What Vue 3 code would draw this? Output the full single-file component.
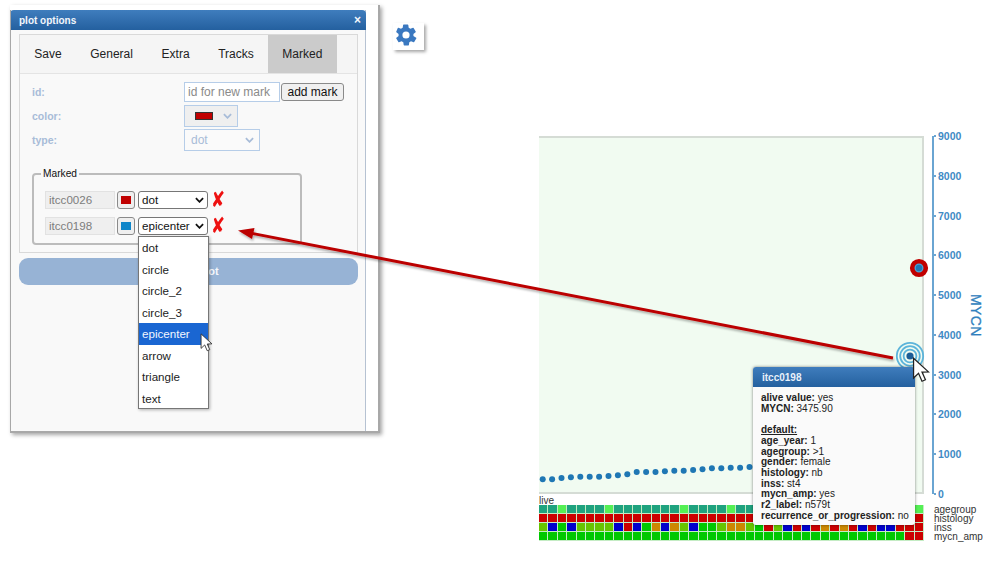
<script setup>
const tabs = ['Save', 'General', 'Extra', 'Tracks', 'Marked']
const options = ['dot', 'circle', 'circle_2', 'circle_3', 'epicenter', 'arrow', 'triangle', 'text']
const ticks = [9000, 8000, 7000, 6000, 5000, 4000, 3000, 2000, 1000, 0]

const dotYs = [479.3, 479.3, 478, 477.3, 476.7, 476.7, 476.7, 476, 475.3, 474.3, 472, 472, 472, 471.3, 470.7, 470.7, 470, 469.3, 468.3, 468.3, 467.7, 467.7, 467, 467, 466.5]
const dots = dotYs.map((y, i) => ({ x: 3.7 + i * 9.4, y: y - 136 }))

const row3 = 'LBGBLLLLBRBGOBOLBGGLO'.split('').concat('OLGRLBRBRORORBRBBRRR'.split(''))
const rows = [
  Array.from({ length: 41 }, (_, i) => ([2, 7, 15, 20, 40].includes(i) ? 'P' : 'T')),
  Array.from({ length: 41 }, () => 'R'),
  row3,
  Array.from({ length: 41 }, (_, i) => (i >= 39 ? 'R' : 'G'))
]
const palette = { T: '#1fa37f', P: '#55f055', R: '#cc0000', L: '#66c400', B: '#0000cc', G: '#00c800', O: '#cc8800' }
const cells = rows.flatMap((r) => r.map((c) => palette[c]))
const rowLabels = ['agegroup', 'histology', 'inss', 'mycn_amp']

const tipTop = [
  ['alive value:', 'yes'],
  ['MYCN:', '3475.90']
]
const tipBottom = [
  ['age_year:', '1'],
  ['agegroup:', '>1'],
  ['gender:', 'female'],
  ['histology:', 'nb'],
  ['inss:', 'st4'],
  ['mycn_amp:', 'yes'],
  ['r2_label:', 'n579t'],
  ['recurrence_or_progression:', 'no']
]
const cursor = 'M1 1 L1 17 L5 13.2 L7.8 19.6 L10.6 18.4 L7.8 12.2 L13 12 Z'
</script>

<template>
  <div class="page">
    <section class="window">
      <div class="dialog">
        <header class="title">
          <span>plot options</span>
          <span class="close">×</span>
        </header>
        <div class="dialog-body">
          <div class="tabbox">
            <nav class="tabs">
              <span v-for="t in tabs" :key="t" class="tab" :class="{ active: t === 'Marked' }">{{ t }}</span>
            </nav>
            <div class="form">
              <div class="form-row r-id">
                <label>id:</label>
                <span class="input-new">id for new mark</span>
                <span class="btn-add">add mark</span>
              </div>
              <div class="form-row r-color">
                <label>color:</label>
                <span class="pick">
                  <i class="pick-swatch"></i>
                  <svg class="chev" viewBox="0 0 10 6"><path d="M1 1l4 4 4-4" /></svg>
                </span>
              </div>
              <div class="form-row r-type">
                <label>type:</label>
                <span class="pick pick-type">
                  dot
                  <svg class="chev" viewBox="0 0 10 6"><path d="M1 1l4 4 4-4" /></svg>
                </span>
              </div>
              <div class="fieldset">
                <span class="legend">Marked</span>
                <div class="mark-row">
                  <span class="mark-id">itcc0026</span>
                  <span class="mark-color"><i class="red"></i></span>
                  <span class="mark-select">dot<svg viewBox="0 0 10 6"><path d="M1 1l4 4 4-4" /></svg></span>
                  <span class="del">✘</span>
                </div>
                <div class="mark-row">
                  <span class="mark-id">itcc0198</span>
                  <span class="mark-color"><i class="blue"></i></span>
                  <span class="mark-select">epicenter<svg viewBox="0 0 10 6"><path d="M1 1l4 4 4-4" /></svg></span>
                  <span class="del">✘</span>
                </div>
              </div>
            </div>
          </div>
          <div class="plot-btn">Update plot</div>
        </div>
      </div>
      <ul class="dropdown">
        <li v-for="o in options" :key="o" :class="{ hl: o === 'epicenter' }">{{ o }}</li>
      </ul>
      <svg class="cursor-small" viewBox="0 0 14 21"><path :d="cursor" /></svg>
    </section>

    <div class="gear-box">
      <svg viewBox="0 0 24 24" class="gear">
        <path d="M19.4 13a7.6 7.6 0 0 0 0-2l2.2-1.7a.5.5 0 0 0 .1-.7l-2.1-3.6a.5.5 0 0 0-.6-.2l-2.6 1a7.6 7.6 0 0 0-1.7-1l-.4-2.8a.5.5 0 0 0-.5-.4h-4.2a.5.5 0 0 0-.5.4l-.4 2.8a7.6 7.6 0 0 0-1.7 1l-2.6-1a.5.5 0 0 0-.6.2L2.3 8.6a.5.5 0 0 0 .1.7L4.6 11a7.6 7.6 0 0 0 0 2l-2.2 1.7a.5.5 0 0 0-.1.7l2.1 3.6c.1.2.4.3.6.2l2.6-1a7.6 7.6 0 0 0 1.7 1l.4 2.8c0 .2.3.4.5.4h4.2c.2 0 .5-.2.5-.4l.4-2.8a7.6 7.6 0 0 0 1.7-1l2.6 1c.2.1.5 0 .6-.2l2.1-3.6a.5.5 0 0 0-.1-.7zM12 15.6a3.6 3.6 0 1 1 0-7.2 3.6 3.6 0 0 1 0 7.2z" />
      </svg>
    </div>

    <section class="chart">
      <div class="chart-top">
        <div class="plot">
          <svg class="dots" width="385" height="358">
            <circle v-for="(d, i) in dots" :key="i" :cx="d.x" :cy="d.y" r="3" fill="#1f77b4" />
          </svg>
        </div>
        <div class="axis">
          <div v-for="t in ticks" :key="t" class="tick"><i></i>{{ t }}</div>
        </div>
        <div class="axis-title">MYCN</div>
      </div>
      <div class="live">live</div>
      <div class="heat-wrap">
        <div class="heat">
          <i v-for="(c, i) in cells" :key="i" :style="{ background: c }"></i>
        </div>
        <div class="heat-labels">
          <span v-for="l in rowLabels" :key="l">{{ l }}</span>
        </div>
      </div>
    </section>

    <svg class="overlay" width="1005" height="569">
      <defs>
        <filter id="sh" x="-5%" y="-20%" width="110%" height="140%">
          <feDropShadow dx="1" dy="2" stdDeviation="1.2" flood-color="#000" flood-opacity=".3" />
        </filter>
      </defs>
      <g filter="url(#sh)">
        <line x1="252" y1="233.4" x2="893" y2="358" stroke="#bb0000" stroke-width="3" />
        <path d="M238 230.5 L254.5 228 L252 239 Z" fill="#bb0000" />
      </g>
      <circle cx="919" cy="268" r="6.8" fill="#4aa3d6" stroke="#c00000" stroke-width="4.6" />
      <circle cx="919" cy="268" r="3.2" fill="#1f77b4" />
      <g fill="none" stroke="#5cb4da" stroke-width="1.8">
        <circle cx="910" cy="356" r="13.2" />
        <circle cx="910" cy="356" r="9.8" />
        <circle cx="910" cy="356" r="6.4" />
      </g>
      <circle cx="910" cy="356" r="3.6" fill="#1c5d96" />
    </svg>

    <aside class="tooltip">
      <header>itcc0198</header>
      <div class="tip-body">
        <div v-for="r in tipTop" :key="r[0]"><b>{{ r[0] }}</b> {{ r[1] }}</div>
        <div class="gap"><b><u>default:</u></b></div>
        <div v-for="r in tipBottom" :key="r[0]"><b>{{ r[0] }}</b> {{ r[1] }}</div>
      </div>
    </aside>

    <svg class="cursor-big" viewBox="0 0 14 21"><path :d="cursor" /></svg>
  </div>
</template>

<style scoped>
.page {
  position: relative;
  width: 1005px;
  height: 569px;
  overflow: hidden;
  background: #fff;
  font-family: "Liberation Sans", Arial, sans-serif;
  color: #222;
}
.window {
  position: absolute;
  left: 10px;
  top: 5px;
  width: 370px;
  height: 428px;
  box-sizing: border-box;
  padding-top: 5px;
  background: #fff;
  border-right: 2px solid #a8a8a8;
  border-bottom: 2px solid #a8a8a8;
  box-shadow: 2px 2px 4px rgba(0, 0, 0, .35);
}
.window::before {
  content: "";
  position: absolute;
  left: 0;
  top: 5px;
  bottom: 0;
  width: 1px;
  background: #a8a8a8;
}
.dialog {
  width: 356px;
  height: 421px;
  box-sizing: border-box;
  background: #f9f9f9;
  border-right: 1px solid #b6c2d2;
  border-left: 1px solid #b6c2d2;
}
.title {
  display: flex;
  justify-content: space-between;
  align-items: center;
  height: 20px;
  margin: 0 -1px;
  padding: 0 5px 0 9px;
  border-radius: 4px 4px 0 0;
  background: linear-gradient(#3f7dbd, #24609f);
  color: #f2f6fb;
  font-size: 10px;
  font-weight: bold;
}
.close { font-size: 12px; }
.dialog-body { padding: 4px 7px 0 8px; }
.tabbox {
  height: 219px;
  box-sizing: border-box;
  border: 1px solid #d9d9d9;
}
.tabs {
  display: flex;
  height: 38px;
  background: #f5f5f5;
  border-bottom: 1px solid #e4e4e4;
}
.tab {
  display: flex;
  align-items: center;
  padding: 0 14.3px;
  font-size: 12px;
  color: #222;
}
.active { background: #cbcbcb; }
.form { position: relative; padding: 8px 0 0 12px; }
.form-row {
  display: flex;
  align-items: center;
}
.form-row label {
  width: 152px;
  flex: none;
  font-size: 10.5px;
  font-weight: bold;
  color: #a8bcd8;
}
.input-new {
  width: 96px;
  height: 20px;
  box-sizing: border-box;
  padding-left: 3px;
  line-height: 18px;
  border: 1px solid #b6cde8;
  background: #fff;
  color: #8a8a8a;
  font-size: 12px;
}
.btn-add {
  width: 63px;
  height: 18px;
  margin-left: 1px;
  box-sizing: border-box;
  border: 1px solid #8a8a8a;
  border-radius: 3px;
  background: #f0f0f0;
  text-align: center;
  line-height: 16px;
  font-size: 12px;
  color: #111;
}
.r-color { margin-top: 3px; }
.r-type { margin-top: 2px; }
.pick {
  position: relative;
  display: flex;
  align-items: center;
  width: 54px;
  height: 22px;
  box-sizing: border-box;
  border: 1px solid #b6cde8;
  background: #efefef;
}
.pick-swatch {
  width: 18px;
  height: 8px;
  margin-left: 10px;
  background: #c00000;
  border: 1px solid #333;
  box-sizing: border-box;
}
.pick-type {
  width: 76px;
  padding-left: 6px;
  background: #fafafa;
  color: #a8bcd8;
  font-size: 12px;
}
.chev {
  position: absolute;
  right: 5px;
  top: 7px;
  width: 9px;
  height: 6px;
  fill: none;
  stroke: #a8bcd8;
  stroke-width: 2;
}
.fieldset {
  position: relative;
  width: 270px;
  height: 72px;
  margin-top: 22px;
  box-sizing: border-box;
  padding: 16px 0 0 11px;
  border: 2px solid #bcbcbc;
  border-radius: 4px;
}
.legend {
  position: absolute;
  left: 7px;
  top: -7px;
  padding: 0 2px;
  background: #f9f9f9;
  font-size: 10.2px;
  line-height: 12px;
  color: #111;
}
.mark-row {
  display: flex;
  align-items: center;
  height: 18px;
  margin-bottom: 8px;
}
.mark-id {
  width: 70px;
  height: 18px;
  box-sizing: border-box;
  padding-left: 3px;
  line-height: 16px;
  border: 1px solid #e2e2e2;
  background: #efefef;
  color: #7d7d7d;
  font-size: 11.6px;
}
.mark-color {
  display: flex;
  align-items: center;
  justify-content: center;
  width: 18px;
  height: 18px;
  margin-left: 2px;
  box-sizing: border-box;
  border: 1px solid #8a8a8a;
  border-radius: 3px;
  background: #efefef;
}
.mark-color i { width: 10px; height: 8px; }
.red { background: #c00000; }
.blue { background: #0f86c9; }
.mark-select {
  position: relative;
  width: 70px;
  height: 18px;
  margin-left: 3px;
  box-sizing: border-box;
  padding-left: 3px;
  line-height: 16px;
  border: 1px solid #767676;
  border-radius: 3px;
  background: #fff;
  color: #111;
  font-size: 11.6px;
}
.mark-select svg {
  position: absolute;
  right: 3px;
  top: 5px;
  width: 9px;
  height: 6px;
  fill: none;
  stroke: #111;
  stroke-width: 2;
}
.del {
  display: inline-block;
  margin-left: 3px;
  color: #ee1111;
  font: bold 21px/18px "DejaVu Sans", sans-serif;
  transform: scale(.8, 1.05);
  transform-origin: left center;
}
.plot-btn {
  height: 27px;
  margin-top: 5px;
  border-radius: 9px;
  background: #97b3d5;
  color: #f4f7fb;
  text-align: center;
  font-size: 11px;
  font-weight: bold;
  line-height: 26px;
}
.dropdown {
  position: absolute;
  left: 128px;
  top: 231px;
  width: 71px;
  height: 173px;
  margin: 0;
  padding: 0;
  box-sizing: border-box;
  list-style: none;
  border: 1px solid #767676;
  background: #fff;
  box-shadow: 1px 1px 3px rgba(0, 0, 0, .3);
  font-size: 11.6px;
  color: #222;
}
.dropdown li {
  height: 21.5px;
  padding-left: 3px;
  line-height: 21.5px;
}
.dropdown .hl { background: #1a66d2; color: #f2f6ff; }
.cursor-small {
  position: absolute;
  left: 190px;
  top: 328px;
  width: 13px;
  height: 19px;
  fill: #fff;
  stroke: #333;
  stroke-width: 1;
}
.gear-box {
  position: absolute;
  left: 393px;
  top: 23px;
  width: 31px;
  height: 27px;
  background: #fff;
  box-shadow: 2px 2px 3px rgba(0, 0, 0, .35);
}
.gear {
  display: block;
  width: 24px;
  height: 24px;
  margin-left: 1px;
  fill: #3a78c0;
}
.chart {
  position: absolute;
  left: 539px;
  top: 136px;
  width: 450px;
}
.chart-top {
  position: relative;
  display: flex;
  height: 358px;
}
.plot {
  width: 385px;
  height: 358px;
  box-sizing: border-box;
  background: #f1fbf1;
  border-top: 2px solid #d5dcd5;
  border-right: 2px solid #d5dcd5;
  border-bottom: 2px solid #d5dcd5;
}
.dots { display: block; margin-top: -2px; }
.axis {
  display: flex;
  flex-direction: column;
  justify-content: space-between;
  height: 358px;
  margin-left: 8px;
  border-left: 2px solid #6aa5d2;
  box-sizing: border-box;
}
.tick {
  position: relative;
  height: 0;
  padding-left: 4px;
  line-height: 0;
  font-size: 10.5px;
  font-weight: bold;
  color: #3f8ac4;
}
.tick i {
  position: absolute;
  left: 0;
  top: -1px;
  width: 2px;
  height: 2px;
  background: #6aa5d2;
}
.axis-title {
  position: absolute;
  left: 429px;
  top: 158px;
  writing-mode: vertical-rl;
  font-size: 14px;
  letter-spacing: .4px;
  -webkit-text-stroke: .3px #2f80bd;
  color: #2f80bd;
}
.live {
  height: 9px;
  margin-top: 2px;
  font-size: 10px;
  line-height: 10px;
  color: #333;
}
.heat-wrap {
  display: flex;
}
.heat {
  display: grid;
  grid-template-columns: repeat(41, 9.4px);
  grid-auto-rows: 9px;
  width: 385px;
}
.heat i {
  display: block;
  border-right: 1px solid #c4ecc4;
  border-bottom: 1px solid #c4ecc4;
}
.heat-labels {
  display: flex;
  flex-direction: column;
  margin-left: 10px;
  font-size: 10px;
  line-height: 9px;
  color: #333;
}
.overlay {
  position: absolute;
  left: 0;
  top: 0;
  pointer-events: none;
}
.tooltip {
  position: absolute;
  left: 753px;
  top: 367px;
  width: 162px;
  height: 158px;
  box-sizing: border-box;
  border-radius: 3px;
  background: #fafafa;
  box-shadow: 0 0 3px rgba(0, 0, 0, .5);
  overflow: hidden;
}
.tooltip header {
  height: 20px;
  padding-left: 9px;
  background: linear-gradient(#3f7dbd, #24609f);
  color: #e8f0fa;
  font-size: 10px;
  font-weight: bold;
  line-height: 21px;
}
.tip-body {
  padding: 6px 0 0 8px;
  font-size: 10px;
  line-height: 10.7px;
  white-space: nowrap;
  color: #222;
}
.gap { margin-top: 10.7px; }
.cursor-big {
  position: absolute;
  left: 910px;
  top: 357px;
  width: 22px;
  height: 26px;
  fill: #fff;
  stroke: #222;
  stroke-width: 1;
}
</style>
